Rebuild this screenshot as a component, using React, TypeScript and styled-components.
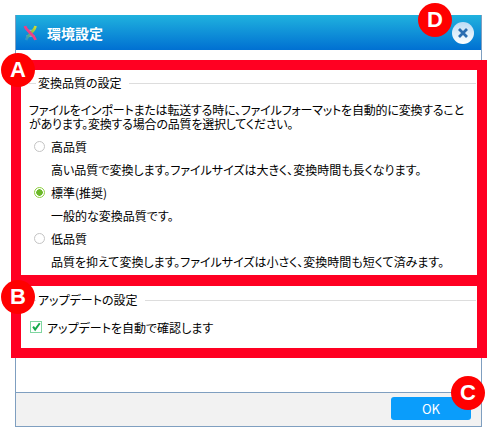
import React from "react";
import styled, { createGlobalStyle } from "styled-components";

const GlobalStyle = createGlobalStyle`
  html, body {
    margin: 0;
    padding: 0;
    background: #ffffff;
  }
  body {
    font-family: "Noto Sans CJK JP", "Liberation Sans", sans-serif;
    font-size: 12px;
    color: #000000;
    font-feature-settings: "palt";
  }
`;

const options = [
  {
    label: "高品質",
    description: "高い品質で変換します。ファイルサイズは大きく、変換時間も長くなります。",
    selected: false,
  },
  {
    label: "標準(推奨)",
    description: "一般的な変換品質です。",
    selected: true,
  },
  {
    label: "低品質",
    description: "品質を抑えて変換します。ファイルサイズは小さく、変換時間も短くて済みます。",
    selected: false,
  },
];

const App = () => {
  return (
    <>
      <GlobalStyle />
      <StyledPage>
        <StyledDialog>
          <StyledTitleBar>
            <StyledLogo viewBox="0 0 15 16">
              <defs>
                <linearGradient id="logoRight" x1="1" y1="0" x2="0" y2="1">
                  <stop offset="0" stopColor="#d8dc2e" />
                  <stop offset="0.45" stopColor="#7cc04a" />
                  <stop offset="1" stopColor="#2c8fd0" />
                </linearGradient>
              </defs>
              <path d="M4 5.5 H11 M3.5 11 H11.5" stroke="#8fb3c4" strokeWidth="1.6" fill="none" />
              <path d="M12.5 1 C12 6 5 9 3 15" stroke="url(#logoRight)" strokeWidth="2.6" fill="none" />
              <path d="M2 1 C3 6 11 9 12.5 15" stroke="#ee3f86" strokeWidth="2.8" fill="none" />
            </StyledLogo>
            <StyledTitle>環境設定</StyledTitle>
            <StyledClose>
              <svg width="12" height="12" viewBox="0 0 12 12">
                <path d="M2 2 L10 10 M10 2 L2 10" stroke="#2a6cb0" strokeWidth="2.8" />
              </svg>
            </StyledClose>
          </StyledTitleBar>
          <StyledContent>
            <StyledSection>
              <StyledLegend>変換品質の設定</StyledLegend>
              <StyledParagraph>
                ファイルをインポートまたは転送する時に、ファイルフォーマットを自動的に変換すること
                <br />
                があります。変換する場合の品質を選択してください。
              </StyledParagraph>
              {options.map((option) => (
                <StyledOption key={option.label}>
                  <StyledOptionRow>
                    <StyledRadio $selected={option.selected} />
                    {option.label}
                  </StyledOptionRow>
                  <StyledDescription>{option.description}</StyledDescription>
                </StyledOption>
              ))}
            </StyledSection>
            <StyledSection>
              <StyledLegend>アップデートの設定</StyledLegend>
              <StyledCheckRow>
                <StyledCheckbox>
                  <svg width="12" height="12" viewBox="0 0 12 12">
                    <path d="M2.5 5.5 L5 9 L10.5 1.5" stroke="#14a84a" strokeWidth="2.4" fill="none" />
                  </svg>
                </StyledCheckbox>
                アップデートを自動で確認します
              </StyledCheckRow>
            </StyledSection>
          </StyledContent>
          <StyledFooter>
            <StyledOkButton>OK</StyledOkButton>
          </StyledFooter>
        </StyledDialog>
        <StyledFrame $top={60} $height={226} />
        <StyledFrame $top={275} $height={83} />
        <StyledBadge $x={18} $y={70}>A</StyledBadge>
        <StyledBadge $x={18} $y={297}>B</StyledBadge>
        <StyledBadge $x={468} $y={393}>C</StyledBadge>
        <StyledBadge $x={435} $y={20}>D</StyledBadge>
      </StyledPage>
    </>
  );
};

const StyledPage = styled.div`
  position: relative;
  width: 497px;
  height: 442px;
  padding: 15px 15px 0;
  box-sizing: border-box;
  overflow: hidden;
`;

const StyledDialog = styled.div`
  display: flex;
  flex-direction: column;
  width: 467px;
  height: 412px;
  box-sizing: border-box;
  border: 1px solid #7f9fc0;
  border-top: none;
`;

const StyledTitleBar = styled.div`
  display: flex;
  align-items: center;
  height: 35px;
  padding: 0 7px;
  background: linear-gradient(180deg, #20b2de 0%, #0070d2 100%);
  color: #ffffff;
`;

const StyledLogo = styled.svg`
  width: 15px;
  height: 16px;
  flex: none;
`;

const StyledTitle = styled.div`
  margin-left: 9px;
  font-size: 14px;
  font-weight: 700;
`;

const StyledClose = styled.div`
  display: flex;
  align-items: center;
  justify-content: center;
  width: 22px;
  height: 22px;
  margin-left: auto;
  border-radius: 50%;
  background: linear-gradient(180deg, #bcdcf5 0%, #ffffff 100%);
`;

const StyledContent = styled.div`
  flex: 1;
  padding: 24px 5px 0 13px;
`;

const StyledSection = styled.div`
  margin-bottom: 18px;
`;

const StyledLegend = styled.div`
  display: flex;
  align-items: center;
  gap: 2px;
  height: 18px;
  line-height: 18px;

  &::before {
    content: "";
    width: 7px;
    height: 1px;
    background: #dddddd;
  }

  &::after {
    content: "";
    flex: 1;
    margin-left: 5px;
    height: 1px;
    background: #dddddd;
  }
`;

const StyledParagraph = styled.div`
  margin: 11px 0 4px;
  line-height: 14px;
  letter-spacing: -0.2px;
`;

const StyledOption = styled.div`
  height: 46px;
`;

const StyledOptionRow = styled.div`
  display: flex;
  align-items: center;
  gap: 6px;
  height: 22px;
  padding-left: 5px;
`;

const StyledRadio = styled.span<{ $selected: boolean }>`
  width: 11px;
  height: 11px;
  box-sizing: border-box;
  border-radius: 50%;
  border: 1px solid ${(props) => (props.$selected ? "#8ccf3f" : "#c4c4c4")};
  background: ${(props) =>
    props.$selected
      ? "radial-gradient(circle, #6cb82a 0 3px, #ffffff 3.5px)"
      : "#ffffff"};
`;

const StyledDescription = styled.div`
  height: 23px;
  padding-top: 1px;
  line-height: 24px;
  padding-left: 22px;
`;

const StyledCheckRow = styled.div`
  display: flex;
  align-items: center;
  gap: 5px;
  height: 18px;
  margin-top: 9px;
  padding-left: 1px;
`;

const StyledCheckbox = styled.span`
  display: flex;
  align-items: center;
  justify-content: center;
  width: 12px;
  height: 12px;
  box-sizing: border-box;
  border: 1px solid #7fd6a0;
  background: #ffffff;
`;

const StyledFooter = styled.div`
  display: flex;
  justify-content: flex-end;
  align-items: center;
  height: 34px;
  box-sizing: border-box;
  padding: 0 10px 2px 0;
  background: #f2f2f2;
  border-top: 1px solid #7f9fc0;
`;

const StyledOkButton = styled.button`
  width: 80px;
  height: 23px;
  border: none;
  border-radius: 3px;
  background: #0a9dfb;
  color: #ffffff;
  font-family: "Noto Sans CJK JP", "Liberation Sans", sans-serif;
  font-size: 13px;
`;

const StyledFrame = styled.div<{ $top: number; $height: number }>`
  position: absolute;
  left: 11px;
  top: ${(props) => props.$top}px;
  width: 476px;
  height: ${(props) => props.$height}px;
  box-sizing: border-box;
  border: 10px solid #ff0022;
`;

const StyledBadge = styled.div<{ $x: number; $y: number }>`
  position: absolute;
  left: ${(props) => props.$x - 17}px;
  top: ${(props) => props.$y - 17}px;
  width: 34px;
  height: 34px;
  border-radius: 50%;
  background: #ff0000;
  color: #ffffff;
  font-family: "Liberation Sans", sans-serif;
  font-size: 22px;
  font-weight: 700;
  line-height: 34px;
  text-align: center;
`;

export default App;
